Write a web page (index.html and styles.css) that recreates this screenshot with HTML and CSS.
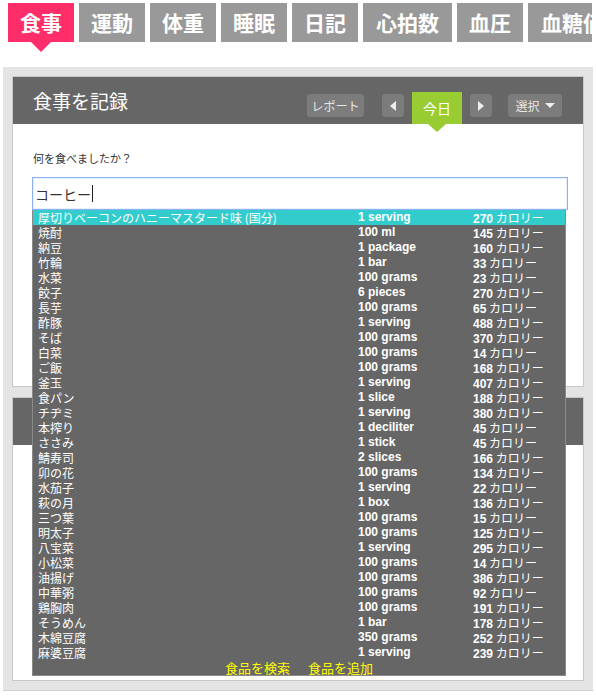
FILE: index.html
```html
<!DOCTYPE html>
<html lang="ja">
<head>
<meta charset="utf-8">
<title>食事を記録</title>
<link rel="stylesheet" href="styles.css">
</head>
<body>
<nav class="tabs">
  <div class="tab active">食事</div>
  <div class="tab">運動</div>
  <div class="tab">体重</div>
  <div class="tab">睡眠</div>
  <div class="tab">日記</div>
  <div class="tab wide">心拍数</div>
  <div class="tab">血圧</div>
  <div class="tab wide">血糖値</div>
</nav>

<div class="outer">
  <section class="panel">
    <header class="panel-head">
      <h1 class="title">食事を記録</h1>
      <span class="btn report">レポート</span>
      <span class="btn arrow prev"><i class="tri-left"></i></span>
      <span class="today">今日</span>
      <span class="btn arrow next"><i class="tri-right"></i></span>
      <span class="btn select">選択 <i class="tri-down"></i></span>
    </header>
    <div class="panel-body first">
      <div class="label">何を食べましたか？</div>
      <div class="search">
        <div class="input">コーヒー<span class="caret"></span></div>
        <div class="dropdown">
          <div class="row hl"><span class="name">厚切りベーコンのハニーマスタード味 (国分)</span><span class="qty">1 serving</span><span class="cal"><b>270</b> カロリー</span></div>
          <div class="row"><span class="name">焼酎</span><span class="qty">100 ml</span><span class="cal"><b>145</b> カロリー</span></div>
          <div class="row"><span class="name">納豆</span><span class="qty">1 package</span><span class="cal"><b>160</b> カロリー</span></div>
          <div class="row"><span class="name">竹輪</span><span class="qty">1 bar</span><span class="cal"><b>33</b> カロリー</span></div>
          <div class="row"><span class="name">水菜</span><span class="qty">100 grams</span><span class="cal"><b>23</b> カロリー</span></div>
          <div class="row"><span class="name">餃子</span><span class="qty">6 pieces</span><span class="cal"><b>270</b> カロリー</span></div>
          <div class="row"><span class="name">長芋</span><span class="qty">100 grams</span><span class="cal"><b>65</b> カロリー</span></div>
          <div class="row"><span class="name">酢豚</span><span class="qty">1 serving</span><span class="cal"><b>488</b> カロリー</span></div>
          <div class="row"><span class="name">そば</span><span class="qty">100 grams</span><span class="cal"><b>370</b> カロリー</span></div>
          <div class="row"><span class="name">白菜</span><span class="qty">100 grams</span><span class="cal"><b>14</b> カロリー</span></div>
          <div class="row"><span class="name">ご飯</span><span class="qty">100 grams</span><span class="cal"><b>168</b> カロリー</span></div>
          <div class="row"><span class="name">釜玉</span><span class="qty">1 serving</span><span class="cal"><b>407</b> カロリー</span></div>
          <div class="row"><span class="name">食パン</span><span class="qty">1 slice</span><span class="cal"><b>188</b> カロリー</span></div>
          <div class="row"><span class="name">チヂミ</span><span class="qty">1 serving</span><span class="cal"><b>380</b> カロリー</span></div>
          <div class="row"><span class="name">本搾り</span><span class="qty">1 deciliter</span><span class="cal"><b>45</b> カロリー</span></div>
          <div class="row"><span class="name">ささみ</span><span class="qty">1 stick</span><span class="cal"><b>45</b> カロリー</span></div>
          <div class="row"><span class="name">鯖寿司</span><span class="qty">2 slices</span><span class="cal"><b>166</b> カロリー</span></div>
          <div class="row"><span class="name">卯の花</span><span class="qty">100 grams</span><span class="cal"><b>134</b> カロリー</span></div>
          <div class="row"><span class="name">水茄子</span><span class="qty">1 serving</span><span class="cal"><b>22</b> カロリー</span></div>
          <div class="row"><span class="name">萩の月</span><span class="qty">1 box</span><span class="cal"><b>136</b> カロリー</span></div>
          <div class="row"><span class="name">三つ葉</span><span class="qty">100 grams</span><span class="cal"><b>15</b> カロリー</span></div>
          <div class="row"><span class="name">明太子</span><span class="qty">100 grams</span><span class="cal"><b>125</b> カロリー</span></div>
          <div class="row"><span class="name">八宝菜</span><span class="qty">1 serving</span><span class="cal"><b>295</b> カロリー</span></div>
          <div class="row"><span class="name">小松菜</span><span class="qty">100 grams</span><span class="cal"><b>14</b> カロリー</span></div>
          <div class="row"><span class="name">油揚げ</span><span class="qty">100 grams</span><span class="cal"><b>386</b> カロリー</span></div>
          <div class="row"><span class="name">中華粥</span><span class="qty">100 grams</span><span class="cal"><b>92</b> カロリー</span></div>
          <div class="row"><span class="name">鶏胸肉</span><span class="qty">100 grams</span><span class="cal"><b>191</b> カロリー</span></div>
          <div class="row"><span class="name">そうめん</span><span class="qty">1 bar</span><span class="cal"><b>178</b> カロリー</span></div>
          <div class="row"><span class="name">木綿豆腐</span><span class="qty">350 grams</span><span class="cal"><b>252</b> カロリー</span></div>
          <div class="row"><span class="name">麻婆豆腐</span><span class="qty">1 serving</span><span class="cal"><b>239</b> カロリー</span></div>
          <div class="foot"><a>食品を検索</a><a>食品を追加</a></div>
        </div>
      </div>
    </div>
  </section>

  <section class="panel second">
    <header class="panel-head"></header>
    <div class="panel-body last"></div>
  </section>
</div>
</body>
</html>
```

FILE: styles.css
```css
* { box-sizing: border-box; }

body {
  margin: 0;
  width: 596px;
  overflow: hidden;
  background: #fff;
  font-family: "Liberation Sans", "Noto Sans CJK JP", sans-serif;
  color: #333;
}

/* ---- tabs ---- */
.tabs {
  display: flex;
  gap: 5px;
  width: 592px;
  height: 42px;
  padding: 3px 0 0 8px;
  overflow: hidden;
  white-space: nowrap;
}
.tab {
  flex: none;
  width: 66px;
  height: 39px;
  background: #999;
  color: #fff;
  font-family: "Noto Sans CJK JP", sans-serif;
  font-size: 21px;
  font-weight: bold;
  line-height: 39px;
  text-align: center;
}
.tab.wide { width: 89px; }
.tab.active {
  position: relative;
  background: #ff2d6a;
}

/* arrow under the active tab is drawn outside the clipped strip */
.tabs + .outer { position: relative; }
.outer::before {
  content: "";
  position: absolute;
  left: 28px;
  top: -25px;
  border-left: 10px solid transparent;
  border-right: 10px solid transparent;
  border-top: 10px solid #ff2d6a;
}

/* ---- outer container ---- */
.outer {
  margin: 25px 0 0 3px;
  width: 590px;
  padding: 9px;
  background: #e3e4e3;
  border-bottom: 1px solid #cfd0cf;
}

.panel {
  background: #fff;
  border: 1px solid #c8c8c8;
}
.panel.second { margin-top: 10px; }

.panel-head {
  display: flex;
  align-items: flex-end;
  height: 47px;
  padding: 0 21px 0 20px;
  background: #666;
}
.title {
  margin: 0 auto 0 0;
  align-self: center;
  font-family: "Noto Sans CJK JP", sans-serif;
  font-weight: normal;
  font-size: 19px;
  line-height: 24px;
  color: #fff;
}

.btn {
  display: flex;
  align-items: center;
  justify-content: center;
  height: 23px;
  margin-bottom: 7px;
  border-radius: 3px;
  background: #7c7c7c;
  color: #e6e6e6;
  font-family: "Noto Sans CJK JP", sans-serif;
  font-size: 12px;
  line-height: 23px;
}
.report { width: 57px; }
.arrow { width: 22px; margin-left: 18px; }
.arrow.next { margin-left: 8px; }
.select { width: 54px; margin-left: 16px; gap: 5px; }

.tri-left {
  width: 0; height: 0;
  border-top: 5px solid transparent;
  border-bottom: 5px solid transparent;
  border-right: 6px solid #eee;
}
.tri-right {
  width: 0; height: 0;
  border-top: 5px solid transparent;
  border-bottom: 5px solid transparent;
  border-left: 6px solid #eee;
}
.tri-down {
  width: 0; height: 0;
  border-left: 5px solid transparent;
  border-right: 5px solid transparent;
  border-top: 5px solid #eee;
}

.today {
  position: relative;
  width: 50px;
  height: 32px;
  margin-left: 8px;
  background: #99cc33;
  color: #fff;
  font-family: "Noto Sans CJK JP", sans-serif;
  font-size: 14px;
  line-height: 32px;
  text-align: center;
}
.today::after {
  content: "";
  position: absolute;
  left: 50%;
  top: 100%;
  margin-left: -9px;
  border-left: 9px solid transparent;
  border-right: 9px solid transparent;
  border-top: 8px solid #99cc33;
}

/* ---- body ---- */
.panel-body.first {
  height: 262px;
  padding: 27px 15px 0 19px;
}
.panel-body.last { height: 235px; }

.label {
  font-family: "Noto Sans CJK JP", sans-serif;
  font-size: 11px;
  line-height: 15px;
  color: #333;
  padding-left: 1px;
}

.search {
  position: relative;
  margin-top: 11px;
  width: 536px;
}
.input {
  display: flex;
  align-items: center;
  height: 33px;
  padding-left: 2px;
  border: 1px solid #8db2f2;
  box-shadow: inset 0 0 0 1px #e8efff;
  font-family: "Noto Sans CJK JP", sans-serif;
  font-size: 14px;
  color: #333;
}
.caret {
  display: inline-block;
  width: 1px;
  height: 17px;
  margin-left: 1px;
  background: #222;
}

.dropdown {
  position: absolute;
  top: 33px;
  left: 0;
  width: 534px;
  background: #666;
  border: 1px solid #8a8a8a;
  border-top: 0;
  z-index: 5;
}
.row {
  display: grid;
  grid-template-columns: 320px 115px auto;
  height: 15px;
  padding-left: 5px;
  color: #fff;
  line-height: 15px;
  white-space: nowrap;
}
.row > span {
  height: 15px;
  overflow: hidden;
}
.row.hl { background: #33cccc; }
.name {
  font-family: "Noto Sans CJK JP", sans-serif;
  font-size: 12px;
}
.qty {
  font-size: 12px;
  font-weight: bold;
}
.cal {
  font-family: "Noto Sans CJK JP", sans-serif;
  font-size: 12px;
}
.cal b {
  font-family: "Liberation Sans", sans-serif;
  font-weight: bold;
}

.foot {
  display: flex;
  justify-content: center;
  gap: 18px;
  height: 15px;
  font-family: "Noto Sans CJK JP", sans-serif;
  font-size: 13px;
  line-height: 15px;
  color: #ffff00;
}
```
